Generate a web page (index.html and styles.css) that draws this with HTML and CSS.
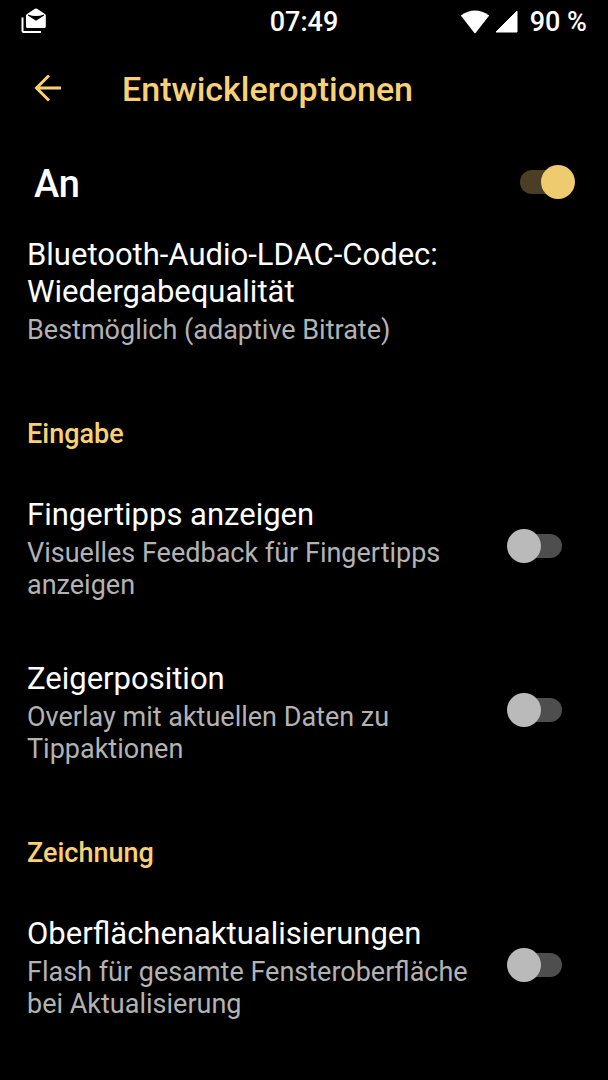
FILE: index.html
```
<!doctype html>
<html lang="de">
<head>
<meta charset="utf-8">
<meta name="viewport" content="width=device-width, initial-scale=1">
<title>Entwickleroptionen</title>
<link rel="stylesheet" href="styles.css">
</head>

<body>
	<div class="statusbar">
		<div class="status-left">
			<svg width="26" height="26" viewBox="0 0 26 26" aria-hidden="true">
				<path d="M1.500 9.500v13.500q0 1 1 1H20" fill="none" stroke="#fff" stroke-width="2" />
				<path d="M6 6L14 .8Q15 .3 16 .8L24 6q.8.6.8 1.500V18.500q0 1.500-1.500 1.500H6.500q-1.500 0-1.500-1.500V7.500q0-.9 1-1.500z" fill="#fff" />
				<path d="M7 6.500q8 3.200 16 0v1L15 12.800 7 7.500z" fill="#000" />
			</svg>
		</div>
		<div class="clock">07:49</div>
		<div class="status-right">
			<svg width="30" height="24" viewBox="0 0 30 24" aria-hidden="true">
				<path d="M.8 5.500Q15-4.500 29.200 5.500L15.600 23q-.6.700-1.200 0z" fill="#fff" />
			</svg>
			<svg width="23" height="23" viewBox="0 0 23 23" aria-hidden="true">
				<path d="M1 22L22 1v21z" fill="#fff" stroke="#fff" stroke-width="1" stroke-linejoin="round" />
			</svg>
			<span class="battery">90 %</span>
		</div>
	</div>

	<header class="toolbar">
		<button class="back" type="button" aria-label="Zurück">
			<svg width="27" height="28" viewBox="0 0 27 28" aria-hidden="true">
				<path d="M27 13H2M15 0.500L2.500 13 15 25.500" fill="none" stroke="#f9d174" stroke-width="3" />
			</svg>
		</button>
		<h1>Entwickleroptionen</h1>
	</header>

	<label class="master">
		<span>An</span>
		<input class="switch" type="checkbox" checked>
	</label>

	<main>
		<div class="item item-first">
			<div class="item-text">
				<div class="item-title">Bluetooth-Audio-LDAC-Codec: Wiedergabequalität</div>
				<div class="item-summary">Bestmöglich (adaptive Bitrate)</div>
			</div>
		</div>

		<h2>Eingabe</h2>
		<label class="item">
			<span class="item-text">
				<span class="item-title">Fingertipps anzeigen</span>
				<span class="item-summary">Visuelles Feedback für Fingertipps anzeigen</span>
			</span>
			<input class="switch" type="checkbox">
		</label>
		<label class="item">
			<span class="item-text">
				<span class="item-title">Zeigerposition</span>
				<span class="item-summary">Overlay mit aktuellen Daten zu Tippaktionen</span>
			</span>
			<input class="switch" type="checkbox">
		</label>

		<h2>Zeichnung</h2>
		<label class="item">
			<span class="item-text">
				<span class="item-title">Oberflächenaktualisierungen</span>
				<span class="item-summary">Flash für gesamte Fensteroberfläche bei Aktualisierung</span>
			</span>
			<input class="switch" type="checkbox">
		</label>
	</main>
</body>
</html>
```
FILE: styles.css
```
body {
	margin: 0;
	background-color: #000;
	color: #fff;
	font-family: Roboto, "Liberation Sans", sans-serif;
}

.statusbar {
	display: grid;
	grid-template-columns: 1fr auto 1fr;
	align-items: center;
	height: 44px;
	padding: 0 21px;
	font-size: 27px;
	font-weight: 500;
}

.status-left,
.status-right {
	display: flex;
	align-items: center;
}

.status-left {
	padding-bottom: 3px;
}

.status-right {
	justify-content: flex-end;
	gap: 5px;
}

.status-right svg {
	margin-bottom: 1px;
}

.battery {
	margin-left: 7px;
}

.toolbar {
	display: flex;
	align-items: center;
	height: 90px;
	padding: 0 34px;
}

.back {
	display: flex;
	margin: 0 61px 0 0;
	padding: 0;
	border: none;
	background: none;
}

h1 {
	margin: 0;
	color: #f9d174;
	font-size: 34px;
	font-weight: 500;
}

.master {
	display: flex;
	align-items: center;
	justify-content: space-between;
	height: 100px;
	padding: 0 33px 0 34px;
	font-size: 38px;
	font-weight: 500;
}

h2 {
	margin: 0;
	padding: 42px 27px 17px;
	color: #f9d174;
	font-size: 27px;
	font-weight: 500;
	line-height: 32px;
}

.item {
	display: flex;
	align-items: center;
	gap: 32px;
	padding: 29px 46px 30px 27px;
}

.item-first {
	padding-top: 2px;
}

.item-text {
	display: flex;
	flex: 1;
	flex-direction: column;
	gap: 4px;
}

.item-title {
	font-size: 31px;
	line-height: 37px;
}

.item-summary {
	color: #b3b3b3;
	font-size: 27px;
	line-height: 32px;
}

.switch {
	display: flex;
	flex: none;
	align-items: center;
	appearance: none;
	width: 55px;
	height: 34px;
	margin: 0 0 5px;
}

/* thumb */
.switch::before {
	content: "";
	z-index: 1;
	flex: none;
	width: 34px;
	height: 34px;
	border-radius: 50%;
	background-color: #bababa;
}

/* track */
.switch::after {
	content: "";
	width: 42px;
	height: 24px;
	margin-left: -21px;
	border-radius: 0 12px 12px 0;
	background-color: #4e4e4e;
}

.switch:checked {
	flex-direction: row-reverse;
}

.switch:checked::before {
	background-color: #efcb70;
}

.switch:checked::after {
	margin: 0 -21px 0 0;
	border-radius: 12px 0 0 12px;
	background-color: #4a3e24;
}
```
